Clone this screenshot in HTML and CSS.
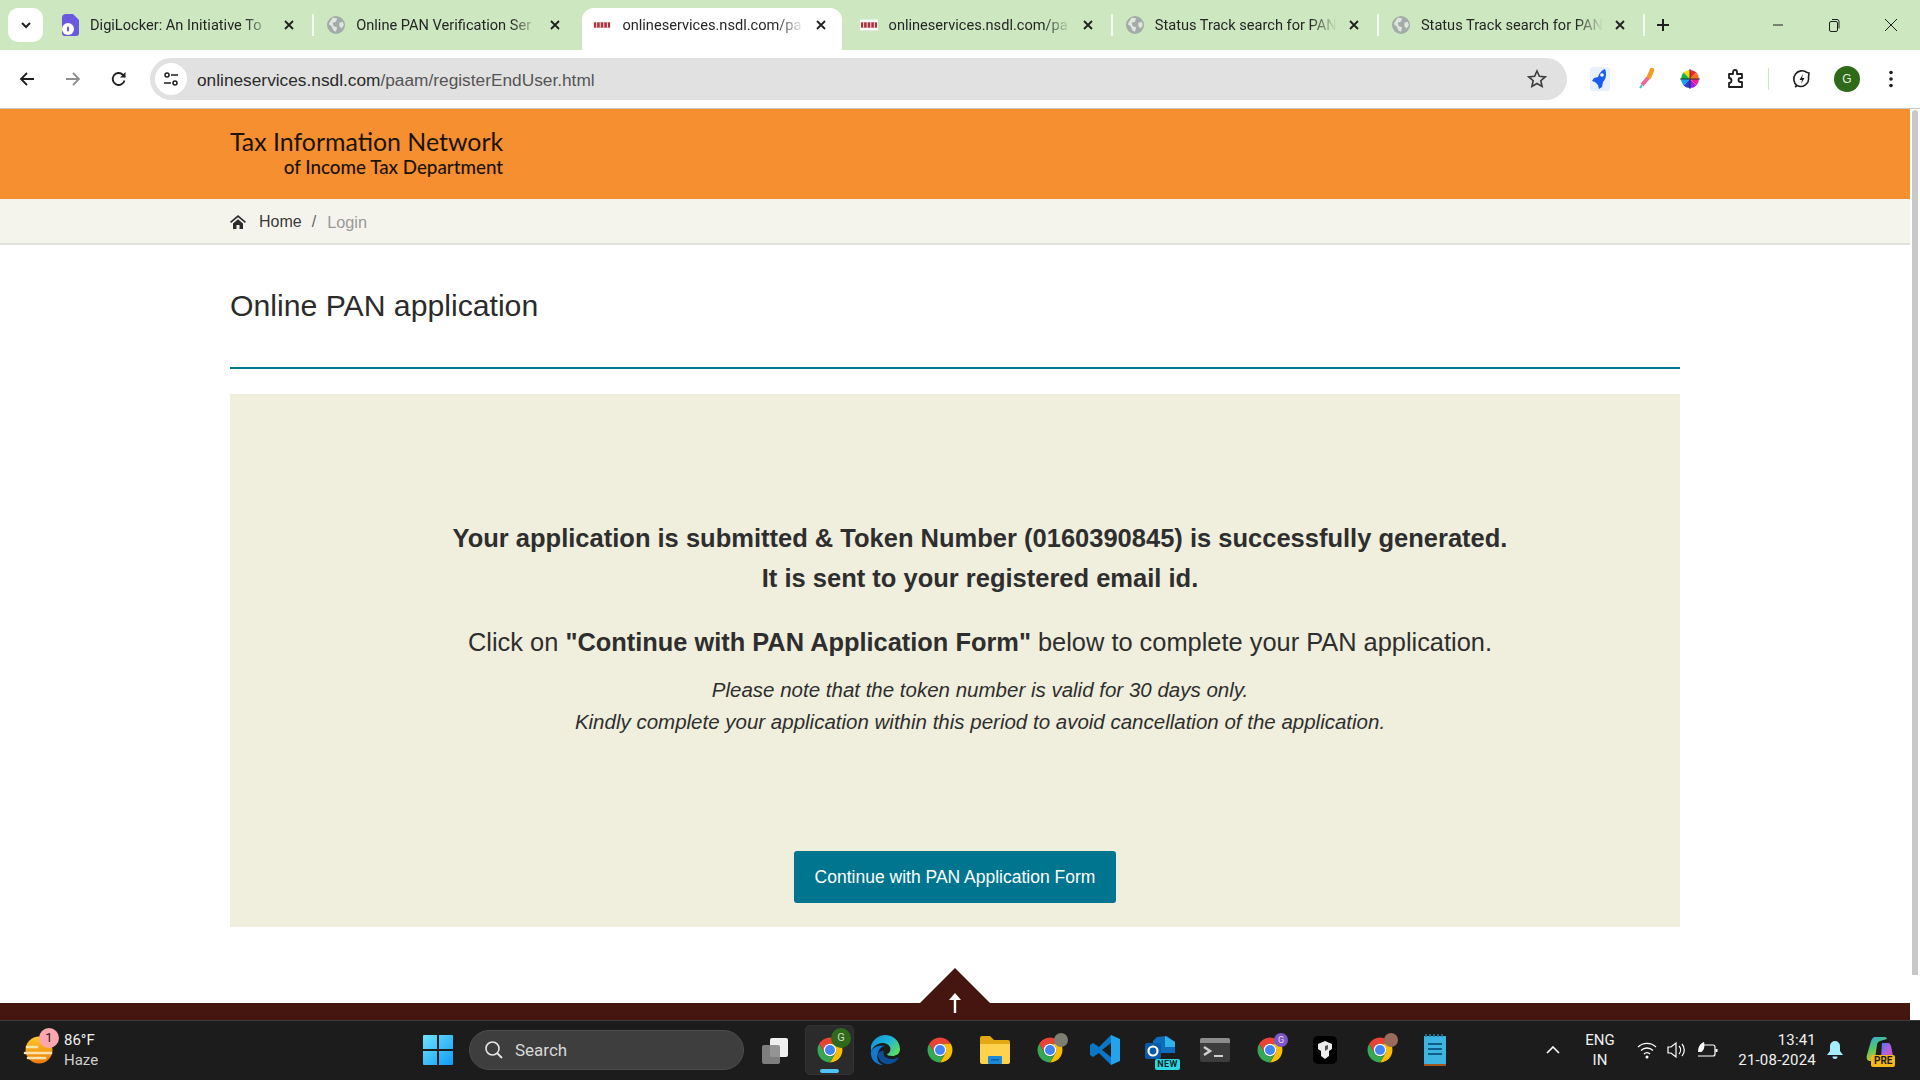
FILE: index.html
```html
<!DOCTYPE html>
<html lang="en">
<head>
<meta charset="UTF-8" />
<title>Online PAN application</title>
<link rel="stylesheet" href="styles.css">
</head>
<body>
  <svg class="defs" width="0" height="0">
    <symbol id="chrome" viewBox="0 0 48 48">
      <path fill="#ea4335" d="M6.68 14A20 20 0 0 1 41.32 14H24A10 10 0 0 0 15.34 29z"/>
      <path fill="#fbbc04" d="M41.32 14A20 20 0 0 1 24 44L32.66 29A10 10 0 0 0 24 14z"/>
      <path fill="#34a853" d="M24 44A20 20 0 0 1 6.68 14L15.34 29A10 10 0 0 0 32.66 29z"/>
      <circle cx="24" cy="24" r="10" fill="#fff"/>
      <circle cx="24" cy="24" r="8" fill="#4285f4"/>
    </symbol>
    <symbol id="globe" viewBox="0 0 16 16">
      <circle cx="8" cy="8" r="8" fill="#a3abaa"/>
      <path fill="#dfe6dc" d="M5 1.500 9 2 8 5 5 6 6 9 9 10 8 14 6 13 4 9 1.500 7zM11 6l3-1 1 3-2 3-2-2z"/>
    </symbol>
    <symbol id="close" viewBox="0 0 12 12">
      <path d="M2 2l8 8M10 2l-8 8" stroke="#1f1f1f" stroke-width="1.800" fill="none"/>
    </symbol>
    <symbol id="nsdl" viewBox="0 0 20 12">
      <rect width="20" height="12" fill="#fff"/>
      <rect x="1" y="3" width="18" height="6" fill="#a8323c"/>
      <path d="M4 3v6M8 3v6M12 3v6M16 3v6" stroke="#fff" stroke-width="1"/>
    </symbol>
  </svg>

  <div class="tabbar">
    <div class="tab-menu">
      <svg width="12" height="12" viewBox="0 0 12 12"><path d="M2 4l4 4 4-4" stroke="#1f1f1f" stroke-width="2" fill="none"/></svg>
    </div>
    <div class="tabs">
      <div class="tab sep">
        <svg class="tab-icon tab-icon-tall" viewBox="0 0 18 22"><path fill="#6a5ae0" d="M5 0h7l6 6v13a3 3 0 0 1-3 3H4a3 3 0 0 1-3-3V4a4 4 0 0 1 4-4z"/><circle cx="7" cy="15" r="6" fill="#fff"/><rect x="6" y="12.500" width="2" height="5" rx="1" fill="#6a5ae0"/></svg>
        <span class="tab-title">DigiLocker: An Initiative To</span>
        <svg class="tab-close"><use href="#close"/></svg>
      </div>
      <div class="tab">
        <svg class="tab-icon"><use href="#globe"/></svg>
        <span class="tab-title">Online PAN Verification Ser</span>
        <svg class="tab-close"><use href="#close"/></svg>
      </div>
      <div class="tab active">
        <svg class="tab-icon"><use href="#nsdl"/></svg>
        <span class="tab-title">onlineservices.nsdl.com/pa</span>
        <svg class="tab-close"><use href="#close"/></svg>
      </div>
      <div class="tab sep">
        <svg class="tab-icon"><use href="#nsdl"/></svg>
        <span class="tab-title">onlineservices.nsdl.com/pa</span>
        <svg class="tab-close"><use href="#close"/></svg>
      </div>
      <div class="tab sep">
        <svg class="tab-icon"><use href="#globe"/></svg>
        <span class="tab-title">Status Track search for PAN</span>
        <svg class="tab-close"><use href="#close"/></svg>
      </div>
      <div class="tab sep">
        <svg class="tab-icon"><use href="#globe"/></svg>
        <span class="tab-title">Status Track search for PAN</span>
        <svg class="tab-close"><use href="#close"/></svg>
      </div>
    </div>
    <svg class="new-tab" width="14" height="14" viewBox="0 0 14 14"><path d="M7 1v12M1 7h12" stroke="#1f1f1f" stroke-width="2"/></svg>
    <div class="window-btns">
      <svg width="12" height="12" viewBox="0 0 12 12"><path d="M1 6h10" stroke="#1f1f1f" stroke-width="1"/></svg>
      <svg width="14" height="14" viewBox="0 0 14 14"><rect x="2.500" y="3.500" width="8" height="10" rx="1.500" fill="none" stroke="#1f1f1f"/><path d="M5 1.500h5a2 2 0 0 1 2 2v7" fill="none" stroke="#1f1f1f"/></svg>
      <svg width="14" height="14" viewBox="0 0 14 14"><path d="M1 1l12 12M13 1L1 13" stroke="#1f1f1f" stroke-width="1"/></svg>
    </div>
  </div>

  <div class="toolbar">
    <div class="nav-btns">
      <svg width="18" height="18" viewBox="0 0 18 18"><path d="M16 9H3M9 3L3 9l6 6" stroke="#1f1f1f" stroke-width="1.800" fill="none"/></svg>
      <svg width="18" height="18" viewBox="0 0 18 18"><path d="M2 9h13M9 3l6 6-6 6" stroke="#8e8e8e" stroke-width="1.800" fill="none"/></svg>
      <svg width="18" height="18" viewBox="0 0 18 18"><path d="M14.500 10.500A6 6 0 1 1 13 4.800L15 7" stroke="#1f1f1f" stroke-width="1.800" fill="none"/><path d="M15.500 2v5.500H10z" fill="#1f1f1f"/></svg>
    </div>
    <div class="omnibox">
      <div class="site-info">
        <svg width="16" height="16" viewBox="0 0 16 16"><circle cx="4" cy="4" r="2" fill="none" stroke="#1f1f1f" stroke-width="1.500"/><path d="M8 4h7M1 12h7" stroke="#1f1f1f" stroke-width="1.500"/><circle cx="12" cy="12" r="2" fill="none" stroke="#1f1f1f" stroke-width="1.500"/></svg>
      </div>
      <span class="url">onlineservices.nsdl.com<span class="url-path">/paam/registerEndUser.html</span></span>
      <svg class="star" width="20" height="20" viewBox="0 0 20 20"><path d="M10 2l2.400 5.300 5.800.6-4.400 3.800 1.300 5.700L10 14.500l-5.100 2.900 1.300-5.700L1.800 7.900l5.800-.6z" fill="none" stroke="#3c3c3c" stroke-width="1.600"/></svg>
    </div>
    <div class="ext-btns">
      <svg class="ext" width="20" height="24" viewBox="0 0 20 24"><rect width="20" height="24" rx="3" fill="#e8f0fe"/><path fill="#1a5cf0" d="M15 2c2 5 1 10-2 13l-1 5-3 2-1-4-3-3-3-1 2-3 4-1C9 6 12 3 15 2z"/><circle cx="12" cy="8" r="1.800" fill="#fff"/></svg>
      <svg class="ext" width="20" height="22" viewBox="0 0 20 22"><path d="M16 2l-3 7" stroke="#f59a23" stroke-width="4.500" stroke-linecap="round"/><path d="M12 10l-6 7" stroke="#f0679b" stroke-width="4"/><path d="M6 17l-2 3" stroke="#3cc" stroke-width="2"/></svg>
      <svg class="ext" width="20" height="20" viewBox="0 0 20 20"><path fill="#ea2a2a" d="M10 10V1a9 9 0 0 1 6.400 2.600z"/><path fill="#f5d90a" d="M10 10L3.600 3.600A9 9 0 0 1 10 1z"/><path fill="#18b23c" d="M10 10H1a9 9 0 0 1 2.600-6.400z"/><path fill="#1aa0e8" d="M10 10L3.600 16.400A9 9 0 0 1 1 10z"/><path fill="#2340d8" d="M10 10v9a9 9 0 0 1-6.400-2.600z"/><path fill="#a020e0" d="M10 10l6.400 6.400A9 9 0 0 1 10 19z"/><path fill="#e820a0" d="M10 10h9a9 9 0 0 1-2.600 6.400z"/><path fill="#f07020" d="M10 10l6.400-6.400A9 9 0 0 1 19 10z"/><path d="M10 0v20M0 10h20" stroke="#222" stroke-width=".8"/></svg>
      <svg class="ext" width="20" height="20" viewBox="0 0 20 20"><path d="M3 5h4V3a2 2 0 0 1 4 0v2h5v4h-1.500a2 2 0 0 0 0 4H16v5H3v-4h0a2 2 0 0 0 0-5z" fill="none" stroke="#1f1f1f" stroke-width="1.800" stroke-linejoin="round"/></svg>
      <span class="ext-sep"></span>
      <svg class="ext" width="20" height="20" viewBox="0 0 20 20"><path d="M5 16.500A8 8 0 0 1 15 3.500M15 3.500l2 .5-.5 4a8 8 0 0 1-11.500 8.500L3 18" fill="none" stroke="#1f1f1f" stroke-width="1.600"/><path d="M11 5l-3.500 6H10l-1 4 3.500-6H10z" fill="#1f1f1f"/></svg>
      <span class="avatar">G</span>
      <svg class="ext" width="20" height="20" viewBox="0 0 20 20"><circle cx="10" cy="3.500" r="1.800" fill="#1f1f1f"/><circle cx="10" cy="10" r="1.800" fill="#1f1f1f"/><circle cx="10" cy="16.500" r="1.800" fill="#1f1f1f"/></svg>
    </div>
  </div>

  <div class="viewport">
    <div class="page">
      <header class="site-header">
        <div class="wrap">
          <div class="logo">
            <span class="logo-main">Tax Information Network</span>
            <span class="logo-sub">of Income Tax Department</span>
          </div>
        </div>
      </header>

      <nav class="breadcrumb">
        <div class="wrap breadcrumb-row">
          <svg width="16" height="14" viewBox="0 0 16 14"><path fill="#2b2b2b" d="M8 0l8 6.800-1 1.200L8 2.200 1 8 0 6.800zM3 8.500L8 4.200l5 4.300V14H9.500v-4h-3v4H3z"/></svg>
          <a class="crumb">Home</a>
          <span class="crumb-sep">/</span>
          <span class="crumb-current">Login</span>
        </div>
      </nav>

      <main class="wrap">
        <h1 class="page-title">Online PAN application</h1>
        <section class="panel">
          <div class="panel-text">
            <p class="lead">Your application is submitted &amp; Token Number (0160390845) is successfully generated.<br>It is sent to your registered email id.</p>
            <p class="action">Click on <b>"Continue with PAN Application Form"</b> below to complete your PAN application.</p>
            <p class="note">Please note that the token number is valid for 30 days only.<br>Kindly complete your application within this period to avoid cancellation of the application.</p>
          </div>
          <button class="continue-btn">Continue with PAN Application Form</button>
        </section>
      </main>

      <footer class="site-footer">
        <div class="to-top">
          <svg width="14" height="20" viewBox="0 0 14 20"><path d="M7 0l6 7H8.200v13H5.800V7H1z" fill="#fff"/></svg>
        </div>
      </footer>
    </div>
    <div class="scrollbar"><div class="thumb"></div></div>
  </div>

  <div class="taskbar">
    <div class="tb-left">
      <div class="weather-icon">
        <svg width="32" height="32" viewBox="0 0 32 32">
          <defs><linearGradient id="sun" x1="0" y1="0" x2="0" y2="1"><stop offset="0" stop-color="#fbc92a"/><stop offset="1" stop-color="#ec7a0c"/></linearGradient></defs>
          <circle cx="16" cy="16" r="13.500" fill="url(#sun)"/>
          <path d="M4 13h10M2 19h26M5 24h17" stroke="#f9e3a8" stroke-width="2.600" stroke-linecap="round"/>
        </svg>
        <span class="weather-badge">1</span>
      </div>
      <div class="weather-text"><span>86°F</span><span class="haze">Haze</span></div>
    </div>

    <div class="tb-item">
      <svg width="30" height="30" viewBox="0 0 30 30"><defs><linearGradient id="win" x1="0" y1="0" x2="1" y2="1"><stop offset="0" stop-color="#6fe3fb"/><stop offset="1" stop-color="#0f9bf5"/></linearGradient></defs><path fill="url(#win)" d="M0 1a1 1 0 0 1 1-1h13v14H0zM16 0h13a1 1 0 0 1 1 1v13H16zM0 16h14v14H1a1 1 0 0 1-1-1zM16 16h14v13a1 1 0 0 1-1 1H16z"/></svg>
    </div>
    <div class="tb-search">
      <svg width="20" height="20" viewBox="0 0 20 20"><circle cx="8.500" cy="8.500" r="6.500" fill="none" stroke="#e6e6e6" stroke-width="1.600"/><path d="M13 13l5 5" stroke="#e6e6e6" stroke-width="1.800"/></svg>
      <span>Search</span>
    </div>
    <div class="tb-item tb-taskview">
      <svg width="30" height="30" viewBox="0 0 30 30"><rect x="10" y="3" width="18" height="19" rx="2" fill="#f0f0f0"/><rect x="2" y="10" width="18" height="19" rx="2" fill="#8a8a8a" fill-opacity=".9"/></svg>
    </div>
    <div class="tb-item tb-active">
      <svg width="30" height="30"><use href="#chrome"/></svg>
      <span class="tb-badge badge-green">G</span>
      <span class="tb-running"></span>
    </div>
    <div class="tb-item">
      <svg width="30" height="30" viewBox="0 0 30 30"><defs><linearGradient id="edge" x1="0" y1="0" x2="1" y2=".7"><stop offset="0" stop-color="#0f8fd8"/><stop offset=".55" stop-color="#1fb5d6"/><stop offset="1" stop-color="#5ade62"/></linearGradient></defs><path fill="url(#edge)" d="M1 11C3 4 9 0 15 0c8 0 15 6 15 14 0 5-4 7-8 7-3 0-5-1-5-2 3-1 4-4 3-7-2-4-8-5-12-3-4 2-6 4-7 8z"/><path fill="#0f7bd0" d="M1 17c-1 7 5 13 12 13-5-2-7-7-5-12 1-4 4-7 7-7-5-1-12 0-14 6z"/><path fill="#0c4f98" d="M8 19c0 7 6 11 12 10 4-1 7-3 9-7-3 2-8 3-12 1-3-1-4-4-3-7-3 0-6 1-6 3z"/></svg>
    </div>
    <div class="tb-item">
      <svg width="30" height="30"><use href="#chrome"/></svg>
    </div>
    <div class="tb-item">
      <svg width="30" height="30" viewBox="0 0 30 30"><path fill="#e2a912" d="M0 3a2 2 0 0 1 2-2h8l4 4h14a2 2 0 0 1 2 2v4H0z"/><path fill="#ffd24d" d="M0 9h30v18a2 2 0 0 1-2 2H2a2 2 0 0 1-2-2z"/><rect x="8" y="21" width="14" height="8" rx="1" fill="#1a8ad8"/><rect x="11" y="24" width="8" height="1.500" fill="#0b5ea8"/></svg>
    </div>
    <div class="tb-item">
      <svg width="30" height="30"><use href="#chrome"/></svg>
      <span class="tb-badge badge-photo"></span>
    </div>
    <div class="tb-item">
      <svg width="30" height="32" viewBox="0 0 30 32"><path fill="#23a3ec" d="M21 1l9 4v22l-9 4z"/><path fill="#0a78c6" d="M21 1L9 13 3 9 0 11v10l3 2 6-4 12 12v-8l-9-7 9-7z"/></svg>
    </div>
    <div class="tb-item">
      <svg width="30" height="30" viewBox="0 0 30 30"><path fill="#0f6cbd" d="M12 2l10-1 8 6v11H8V6z"/><path fill="#2fb5ea" d="M20 1l10 6v5H20z"/><rect y="8" width="16" height="16" rx="2" fill="#0a5aa8"/><circle cx="8" cy="16" r="4.500" fill="none" stroke="#fff" stroke-width="2.200"/></svg>
      <span class="tb-new">NEW</span>
    </div>
    <div class="tb-item">
      <svg width="30" height="24" viewBox="0 0 30 24"><rect width="30" height="24" rx="2" fill="#3d3d3d"/><path d="M0 2a2 2 0 0 1 2-2h26a2 2 0 0 1 2 2v3H0z" fill="#8c8c8c"/><path d="M4 9l6 4-6 4" stroke="#d0d0d0" stroke-width="2.500" fill="none"/><path d="M14 18h9" stroke="#d0d0d0" stroke-width="2"/></svg>
    </div>
    <div class="tb-item">
      <svg width="30" height="30"><use href="#chrome"/></svg>
      <span class="tb-badge badge-purple">G</span>
    </div>
    <div class="tb-item">
      <svg width="24" height="28" viewBox="0 0 24 28"><rect width="24" height="28" rx="5" fill="#000"/><path fill="#eee" d="M12 5l7 3v5l-3 2v5l-4 3-4-3v-5l-3-2V8z"/><path fill="#555" d="M12 10l3-1v4l-3 2z"/></svg>
    </div>
    <div class="tb-item">
      <svg width="30" height="30"><use href="#chrome"/></svg>
      <span class="tb-badge badge-person"></span>
    </div>
    <div class="tb-item">
      <svg width="22" height="32" viewBox="0 0 22 32"><rect y="2" width="22" height="30" fill="#a0561c"/><rect y="2" width="22" height="28" rx="1" fill="#3db5e0"/><path d="M4 10h14M4 15h14M4 20h14" stroke="#0c5f87" stroke-width="2"/><path d="M2 0v3M6 0v3M10 0v3M14 0v3M18 0v3" stroke="#2a7fa8" stroke-width="1.500"/></svg>
    </div>

    <div class="tb-right">
      <svg class="tray-chevron" width="14" height="8" viewBox="0 0 14 8"><path d="M1 7l6-6 6 6" stroke="#fff" stroke-width="1.600" fill="none"/></svg>
      <div class="lang"><span>ENG</span><span>IN</span></div>
      <div class="tray-icon"><svg width="20" height="18" viewBox="0 0 20 18"><path d="M1 6a13 13 0 0 1 18 0M4 9.500a8.500 8.500 0 0 1 12 0M7 13a4 4 0 0 1 6 0" stroke="#fff" stroke-width="1.300" fill="none"/><circle cx="10" cy="16" r="1.500" fill="#fff"/></svg></div>
      <div class="tray-icon"><svg width="20" height="18" viewBox="0 0 20 18"><path d="M1 6h3l5-4v14l-5-4H1z" stroke="#fff" stroke-width="1.200" fill="none"/><path d="M12 5a6 6 0 0 1 0 8M15 3a9 9 0 0 1 0 12" stroke="#fff" stroke-width="1.200" fill="none"/></svg></div>
      <div class="tray-icon"><svg width="22" height="18" viewBox="0 0 22 18"><path d="M7 4h10a2 2 0 0 1 2 2v7a2 2 0 0 1-2 2H2" stroke="#fff" stroke-width="1.200" fill="none"/><rect x="19.500" y="8" width="2" height="3" fill="#fff"/><path d="M2 11C2 5 5 2 8 1c1 4 0 9-3 10z" fill="#fff"/></svg></div>
      <div class="clock"><span>13:41</span><span>21-08-2024</span></div>
      <div class="tray-bell"><svg width="16" height="20" viewBox="0 0 16 20"><path fill="#a5ecff" d="M8 1a5 5 0 0 1 5 5v5l3 4H0l3-4V6a5 5 0 0 1 5-5z"/><path fill="#a5ecff" d="M5.500 16.500h5A2.500 2.500 0 0 1 8 19a2.500 2.500 0 0 1-2.500-2.500z"/></svg></div>
      <div class="copilot">
        <svg width="28" height="28" viewBox="0 0 28 28"><defs><linearGradient id="cop-l" x1="0" y1="0" x2=".4" y2="1"><stop offset="0" stop-color="#2aa8f0"/><stop offset=".55" stop-color="#5ac85c"/><stop offset="1" stop-color="#e7c030"/></linearGradient><linearGradient id="cop-r" x1="0" y1="0" x2="1" y2="1"><stop offset="0" stop-color="#3a7cf0"/><stop offset=".5" stop-color="#b060e0"/><stop offset="1" stop-color="#e850a0"/></linearGradient></defs><path fill="url(#cop-l)" d="M9 1h10c1 0 2 1 2 2l-7 2c-2 1-3 2-3 4l-2 13c0 2-1 3-3 3H4c-3 0-4-3-3-6L5 5c1-2 2-4 4-4z"/><path fill="url(#cop-r)" d="M16 7h6c2 0 2 1 3 3l2 10c0 3-1 5-4 5H13c2 0 2-2 2-3l1-15z"/></svg>
        <span class="pre-tag">PRE</span>
      </div>
    </div>
  </div>
</body>
</html>
```

FILE: styles.css
```css
/* Page frame */
html, body {
  margin: 0;
  padding: 0;
  height: 100%;
  overflow: hidden;
}
body {
  display: flex;
  flex-direction: column;
  width: 1920px;
  height: 1080px;
  font-family: "Liberation Sans", Arial, sans-serif;
  color: #333;
}
.defs {
  position: absolute;
}

/* Browser tabs */
.tabbar {
  display: flex;
  align-items: flex-start;
  height: 50px;
  background: #cde8c0;
  flex: none;
}
.tab-menu {
  display: flex;
  align-items: center;
  justify-content: center;
  width: 35px;
  height: 34px;
  margin: 8px 0 0 8px;
  background: #fff;
  border-radius: 10px;
}
.tabs {
  display: flex;
  gap: 6.2px;
  margin-left: 7px;
  margin-top: 8px;
}
.tab {
  position: relative;
  display: flex;
  align-items: center;
  width: 260px;
  height: 34px;
  padding: 0 15px 0 11px;
  box-sizing: border-box;
  font-family: Roboto, sans-serif;
  font-size: 14.6px;
  color: #262626;
}
.tab.active {
  height: 42px;
  padding-bottom: 8px;
  background: #fff;
  border-radius: 12px 12px 0 0;
}
.tab.sep::after {
  content: "";
  position: absolute;
  right: -4px;
  top: 6px;
  width: 2px;
  height: 22px;
  background: #f4f9f1;
}
.tab-icon {
  width: 18px;
  height: 18px;
  flex: none;
  margin-right: 11px;
}
.tab-icon-tall {
  height: 22px;
}
.tab-title {
  flex: 1;
  white-space: nowrap;
  overflow: hidden;
  -webkit-mask-image: linear-gradient(90deg, #000 85%, transparent);
  mask-image: linear-gradient(90deg, #000 85%, transparent);
}
.tab-close {
  width: 12px;
  height: 12px;
  flex: none;
  margin-left: 11px;
}
.new-tab {
  margin: 18px 0 0 15px;
}
.window-btns {
  display: flex;
  align-items: center;
  gap: 43px;
  margin: 18px 0 0 auto;
  padding-right: 22px;
}

/* Address bar */
.toolbar {
  display: flex;
  align-items: center;
  height: 58px;
  flex: none;
  background: #fff;
  border-radius: 10px 10px 0 0;
  box-sizing: border-box;
}
.nav-btns {
  display: flex;
  flex: none;
  gap: 28px;
  padding-left: 18px;
  width: 150px;
  box-sizing: border-box;
}
.omnibox {
  display: flex;
  flex: none;
  align-items: center;
  width: 1417px;
  height: 42px;
  background: #e1e1e1;
  border-radius: 21px;
  box-sizing: border-box;
  padding: 0 20px 0 5px;
  font-size: 17.3px;
  font-family: "Liberation Sans", Arial, sans-serif;
}
.site-info {
  display: flex;
  align-items: center;
  justify-content: center;
  width: 32px;
  height: 32px;
  background: #fff;
  border-radius: 50%;
}
.url {
  margin-left: 10px;
  padding-top: 2px;
  color: #2a2a2a;
}
.url-path {
  color: #555;
}
.star {
  margin-left: auto;
}
.ext-btns {
  display: flex;
  flex: none;
  align-items: center;
  margin-left: 23px;
}
.ext {
  flex: none;
}
.ext-btns .ext {
  margin-right: 26px;
}
.ext-btns .ext:nth-child(2) {
  margin-right: 24px;
}
.ext-btns .ext:nth-child(4) {
  margin-right: 22px;
}
.ext-sep {
  width: 1px;
  height: 22px;
  background: #cde8c0;
  margin-right: 23px;
}
.ext-btns .ext:nth-child(6) {
  margin-right: 22px;
}
.ext-btns .ext:last-child {
  margin-right: 0;
}
.avatar {
  display: flex;
  align-items: center;
  justify-content: center;
  width: 26px;
  height: 26px;
  border-radius: 50%;
  background: #2f6a1a;
  color: #e4ecdf;
  font-size: 12px;
  margin-right: 21px;
}

/* Website */
.viewport {
  display: flex;
  flex: 1;
  min-height: 0;
  border-top: 1px solid #c8c8c8;
}
.page {
  display: flex;
  flex-direction: column;
  flex: 1;
  min-width: 0;
}
.scrollbar {
  width: 10px;
  background: #fff;
  display: flex;
  justify-content: center;
  flex: none;
}
.thumb {
  width: 6px;
  height: 865px;
  background: #c8c8c8;
  border-radius: 3px 3px 0 0;
  margin-top: 1px;
}
.wrap {
  width: 1450px;
  margin: 0 auto;
}
.site-header {
  height: 90px;
  background: #f68f2f;
  flex: none;
}
.logo {
  display: inline-flex;
  flex-direction: column;
  align-items: flex-end;
  padding-top: 18px;
  font-family: Lato, sans-serif;
  color: #1c1308;
}
.logo-main {
  font-size: 24.9px;
  line-height: 29px;
}
.logo-sub {
  font-size: 18.8px;
  line-height: 22px;
  font-weight: 500;
}
.breadcrumb {
  height: 46px;
  background: #f5f4ec;
  border-bottom: 2px solid #e2e2dc;
  box-sizing: border-box;
  flex: none;
}
.breadcrumb-row {
  display: flex;
  align-items: center;
  height: 44px;
  padding-top: 2px;
  box-sizing: border-box;
  font-size: 16px;
}
.crumb {
  margin-left: 13px;
  color: #3a3a3a;
}
.crumb-sep {
  margin: 0 11px 0 10px;
  color: #666;
}
.crumb-current {
  color: #999;
  font-size: 16.3px;
}
.page-title {
  margin: 0;
  height: 124px;
  padding-top: 43px;
  box-sizing: border-box;
  border-bottom: 2px solid #00758f;
  font-size: 30.2px;
  line-height: 36px;
  font-weight: 400;
  color: #2b2b2b;
}
.panel {
  display: flex;
  flex-direction: column;
  align-items: center;
  margin-top: 25px;
  padding: 124px 0 24px;
  background: #f0eedd;
}
.panel-text {
  margin-left: 50px;
  text-align: center;
  color: #2e2e2e;
}
.lead {
  margin: 0;
  font-size: 25.5px;
  line-height: 40px;
  font-weight: 700;
}
.action {
  margin: 24px 0 0;
  font-size: 25.4px;
  line-height: 40px;
}
.note {
  margin: 12px 0 0;
  font-size: 20.5px;
  line-height: 32px;
  font-style: italic;
}
.continue-btn {
  width: 322px;
  height: 52px;
  margin-top: 113px;
  border: none;
  border-radius: 3px;
  background: #00758f;
  color: #fff;
  font-family: "Liberation Sans", Arial, sans-serif;
  font-size: 17.5px;
  cursor: pointer;
}
.site-footer {
  position: relative;
  height: 17px;
  margin-top: auto;
  background: #45150f;
  flex: none;
}
.to-top {
  position: absolute;
  left: 920px;
  top: -35px;
  width: 70px;
  height: 52px;
  display: flex;
  justify-content: center;
  padding-top: 25px;
  box-sizing: border-box;
}
.to-top::before {
  content: "";
  position: absolute;
  left: 0;
  top: 0;
  width: 70px;
  height: 35px;
  background: #45150f;
  clip-path: polygon(50% 0, 100% 100%, 0 100%);
}
.to-top svg {
  position: relative;
}

/* Windows taskbar */
.taskbar {
  display: flex;
  align-items: center;
  height: 60px;
  flex: none;
  background: #1c1c1c;
  border-top: 1px solid #3c3c3c;
  padding-bottom: 1px;
  box-sizing: border-box;
  font-family: Roboto, sans-serif;
  color: #f0f0f0;
  font-size: 15px;
}
.tb-left {
  display: flex;
  align-items: center;
  width: 410px;
  padding-left: 23px;
  box-sizing: border-box;
  flex: none;
}
.weather-icon {
  position: relative;
  height: 32px;
}
.weather-badge {
  position: absolute;
  left: 16px;
  top: -6px;
  width: 20px;
  height: 20px;
  border-radius: 50%;
  background: #f9a6ae;
  color: #2a1a1a;
  font-size: 13px;
  line-height: 20px;
  text-align: center;
}
.weather-text {
  display: flex;
  flex-direction: column;
  margin-left: 9px;
  line-height: 20px;
}
.haze {
  color: #cfcfcf;
}
.tb-item {
  position: relative;
  display: flex;
  align-items: center;
  justify-content: center;
  width: 55px;
  height: 50px;
  flex: none;
}
.tb-taskview {
  margin-left: 3px;
}
.tb-search {
  display: flex;
  align-items: center;
  width: 275px;
  height: 40px;
  margin-left: 4px;
  padding-left: 14px;
  box-sizing: border-box;
  background: #3e3e3e;
  border: 1px solid #4c4c4c;
  border-radius: 20px;
  font-size: 17px;
  color: #d8d8d8;
  flex: none;
}
.tb-search span {
  margin-left: 11px;
}
.tb-active::before {
  content: "";
  position: absolute;
  left: 3px;
  right: 3px;
  top: 0;
  bottom: 0;
  background: #2b2b2b;
  border: 1px solid #333;
  border-radius: 5px;
}
.tb-active svg {
  position: relative;
}
.tb-running {
  position: absolute;
  left: 18px;
  bottom: 2px;
  width: 19px;
  height: 4px;
  border-radius: 2px;
  background: #4fc3f7;
}
.tb-badge {
  position: absolute;
  left: 30px;
  top: 4px;
  width: 18px;
  height: 18px;
  border-radius: 50%;
  font-size: 11px;
  line-height: 18px;
  text-align: center;
}
.badge-green {
  left: 29px;
  top: 3px;
  width: 20px;
  height: 20px;
  line-height: 20px;
  background: #2f6a1a;
  color: #cfdcc8;
}
.badge-purple {
  top: 8px;
  left: 32px;
  width: 14px;
  height: 14px;
  line-height: 14px;
  font-size: 9px;
  background: #7d57c8;
  color: #e6def5;
}
.badge-photo {
  top: 8px;
  left: 32px;
  width: 14px;
  height: 14px;
  background: #7d7d70;
}
.badge-person {
  top: 8px;
  left: 32px;
  width: 14px;
  height: 14px;
  background: #9a6a5a;
}
.tb-new {
  position: absolute;
  right: 7px;
  bottom: 5px;
  padding: 0 2px;
  background: #2fd8e0;
  color: #0c2a30;
  font-size: 9px;
  font-weight: 700;
  line-height: 11px;
  border-radius: 2px;
  letter-spacing: 0.5px;
}
.tb-right {
  display: flex;
  align-items: center;
  margin-left: auto;
  padding-right: 14px;
}
.tray-chevron {
  margin-right: 16px;
}
.lang {
  display: flex;
  flex-direction: column;
  align-items: center;
  width: 48px;
  line-height: 20px;
}
.tray-icon {
  display: flex;
  justify-content: center;
  width: 30px;
}
.lang + .tray-icon {
  margin-left: 8px;
}
.clock {
  display: flex;
  flex-direction: column;
  align-items: flex-end;
  width: 94px;
  line-height: 20px;
  letter-spacing: 0.2px;
}
.tray-bell {
  display: flex;
  justify-content: center;
  width: 38px;
}
.copilot {
  position: relative;
  display: flex;
  justify-content: center;
  width: 52px;
}
.pre-tag {
  position: absolute;
  left: 17px;
  bottom: -3px;
  padding: 0 3px;
  background: #f5b81c;
  color: #1c1c1c;
  font-size: 10px;
  font-weight: 700;
  line-height: 12px;
  border-radius: 2px;
}
```
